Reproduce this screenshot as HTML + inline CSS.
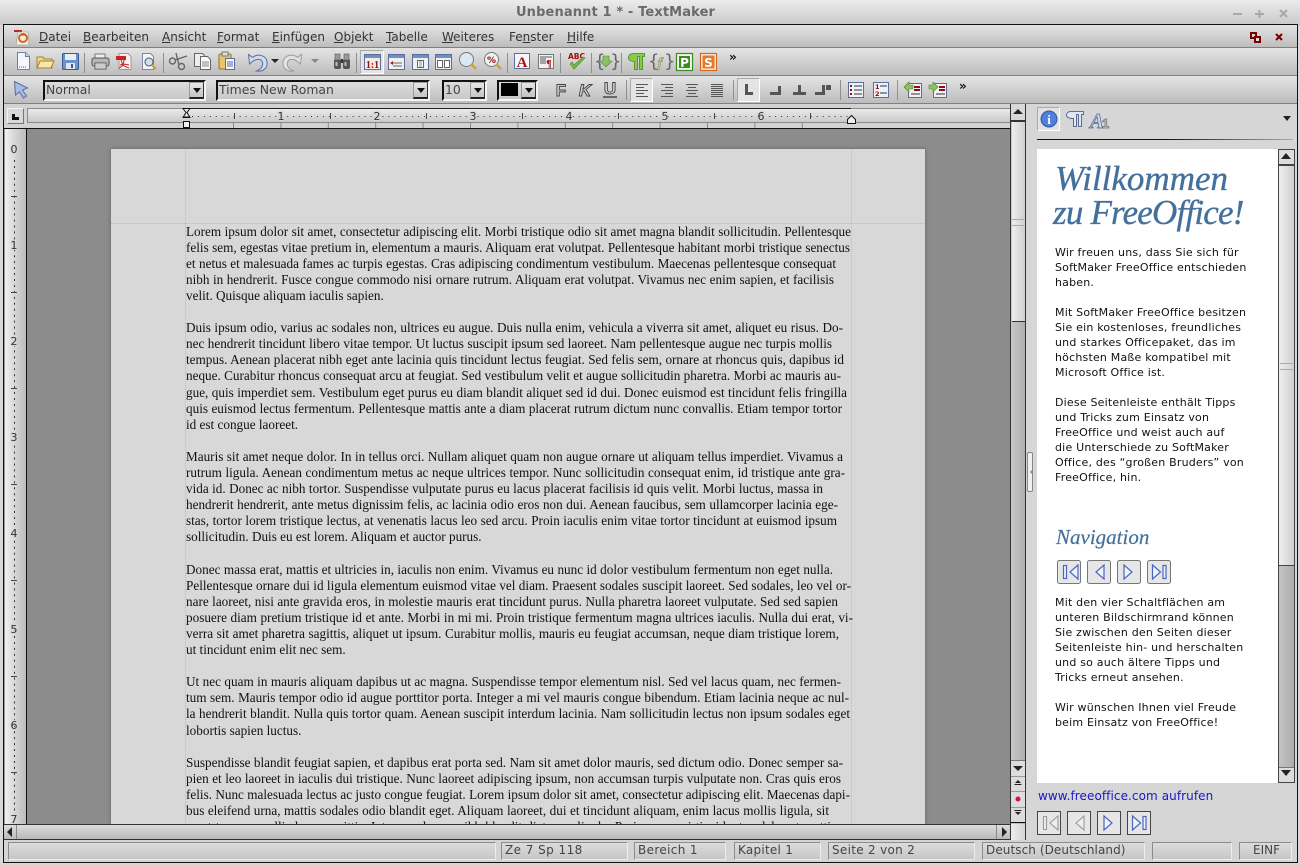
<!DOCTYPE html>
<html lang="de"><head><meta charset="utf-8"><title>Unbenannt 1 * - TextMaker</title>
<style>
html,body{margin:0;padding:0;width:1300px;height:865px;overflow:hidden;background:#d8d8d8}
*{box-sizing:border-box}
body{position:relative;font-family:"DejaVu Sans","Liberation Sans",sans-serif;font-size:12px;color:#333}
.a,.t,.bar,.btn,.combo,.st{position:absolute}
.t{white-space:nowrap;line-height:15px}
.bar{left:4px;width:1293px;background:linear-gradient(#e4e4e4,#bdbdbd)}
.m u{text-decoration:underline}
.combo{height:21px;background:linear-gradient(#dcdcdc,#c8c8c8);border:2px solid;border-color:#111 #f4f4f4 #f4f4f4 #111;font-size:12.4px;color:#444;padding:0 0 0 1px;line-height:15px;white-space:nowrap}
.combo i{position:absolute;right:0;top:0;width:15px;height:17px;background:linear-gradient(#e6e6e6,#c4c4c4);border:1px solid #999;border-bottom:2px solid #222;border-right:1px solid #333}
.combo i:after{content:"";position:absolute;left:3px;top:5px;border:4px solid transparent;border-top:5px solid #111;border-bottom:0}
.st{top:842px;height:18px;border:1px solid;border-color:#8c8c8c #eee #eee #8c8c8c;background:linear-gradient(#dcdcdc,#c6c6c6);color:#444;font-size:12px;line-height:15px;padding:0 0 0 3px;letter-spacing:.35px;white-space:nowrap}
.btn{background:linear-gradient(90deg,#e8e8e8,#cfcfcf);border:1px solid #555}
#doc{position:absolute;left:186px;top:223.6px;font-family:"Liberation Serif",serif;font-size:13.2px;line-height:16.1px;color:#111}
#doc p{margin:0;height:16.1px;white-space:nowrap;text-align:justify;text-align-last:justify}
#doc p.l{text-align:left;text-align-last:left}
#doc p.b{height:16.1px}
#sb .t{left:1055px;font-size:11px;color:#111;letter-spacing:.2px}
.h{font-family:"Liberation Serif",serif;font-style:italic;color:#44709c;position:absolute;white-space:nowrap;-webkit-text-stroke:.35px #44709c}
</style></head><body>

<!-- window frame -->
<div class="a" style="left:0;top:0;width:1300px;height:25px;background:linear-gradient(#ececec,#c9c9c9)"></div>
<div class="t" style="left:516px;top:5px;font-weight:bold;font-size:13px;color:#6a6a6a;letter-spacing:.13px">Unbenannt 1 * - TextMaker</div>
<div class="a" style="left:3px;top:24px;width:1295px;height:839px;border:1px solid #111;background:#d6d6d6"></div>

<!-- bars -->
<div class="bar" style="top:25px;height:22px"></div>
<div class="a" style="left:4px;top:47px;width:1293px;height:1px;background:#808080"></div>
<div class="bar" style="top:48px;height:27px"></div>
<div class="a" style="left:4px;top:75px;width:1293px;height:1px;background:#808080"></div>
<div class="bar" style="top:76px;height:27px"></div>
<div class="a" style="left:4px;top:103px;width:1293px;height:1px;background:#808080"></div>

<!-- menu -->
<div class="m">
<div class="t" style="left:39px;top:30px"><u>D</u>atei</div>
<div class="t" style="left:83px;top:30px"><u>B</u>earbeiten</div>
<div class="t" style="left:162px;top:30px"><u>A</u>nsicht</div>
<div class="t" style="left:217px;top:30px"><u>F</u>ormat</div>
<div class="t" style="left:272px;top:30px"><u>E</u>infügen</div>
<div class="t" style="left:334px;top:30px"><u>O</u>bjekt</div>
<div class="t" style="left:386px;top:30px"><u>T</u>abelle</div>
<div class="t" style="left:442px;top:30px"><u>W</u>eiteres</div>
<div class="t" style="left:509px;top:30px">Fe<u>n</u>ster</div>
<div class="t" style="left:567px;top:30px"><u>H</u>ilfe</div>
</div>

<!-- combos row 2 -->
<div class="combo" style="left:43px;top:80px;width:163px">Normal<i></i></div>
<div class="combo" style="left:216px;top:80px;width:214px">Times New Roman<i></i></div>
<div class="combo" style="left:442px;top:80px;width:45px">10<i></i></div>
<div class="combo" style="left:497px;top:80px;width:41px"><span class="a" style="left:2px;top:1px;width:17px;height:13px;background:#000"></span><i></i></div>
<!-- pressed boxes -->
<div class="a" style="left:630px;top:78px;width:23px;height:24px;background:#e4e4e4;border:1px solid;border-color:#aaa #fff #fff #aaa"></div>
<div class="a" style="left:737px;top:78px;width:23px;height:24px;background:#e4e4e4;border:1px solid;border-color:#aaa #fff #fff #aaa"></div>
<div class="a" style="left:360px;top:50px;width:24px;height:24px;background:#e4e4e4;border:1px solid;border-color:#aaa #fff #fff #aaa"></div>
<div class="t" style="left:729px;top:50px;font-size:12px;font-weight:bold;color:#111">»</div>
<div class="t" style="left:959px;top:79px;font-size:12px;font-weight:bold;color:#111">»</div>

<!-- horizontal ruler row -->
<div class="a" style="left:4px;top:104px;width:1006px;height:24px;background:#d2d2d2"></div>
<div class="a" style="left:7px;top:108px;width:17px;height:16px;background:#d8d8d8;border:1px solid;border-color:#f2f2f2 #777 #777 #f2f2f2"></div>
<div class="a" style="left:12px;top:114px;width:7px;height:6px;border-left:3px solid #111;border-bottom:3px solid #111"></div>
<div class="a" style="left:27px;top:108px;width:983px;height:15px;background:linear-gradient(#eaeaea,#c9c9c9);border:1px solid #8a8a8a;border-width:1px 0 1px 1px"></div>
<div class="a" style="left:187px;top:108px;width:664px;height:1px;background:#222"></div>
<div class="a" style="left:4px;top:128px;width:1006px;height:1px;background:#111"></div>

<!-- vertical ruler + workspace -->
<div class="a" style="left:4px;top:129px;width:22px;height:695px;background:linear-gradient(90deg,#f0f0f0,#cfcfcf 60%,#bcbcbc);border-left:1px solid #999"></div>
<div class="a" style="left:26px;top:129px;width:1px;height:695px;background:#111"></div>
<div class="a" style="left:27px;top:129px;width:983px;height:695px;background:#8c8c8c"></div>
<div class="a" style="left:111px;top:149px;width:814px;height:675px;background:#d8d8d8;box-shadow:0 0 3px 1px #737373"></div>

<!-- margin guides -->
<div class="a" style="left:185px;top:149px;width:0;height:675px;border-left:1px dotted #bcbcbc"></div>
<div class="a" style="left:851px;top:149px;width:0;height:675px;border-left:1px dotted #bcbcbc"></div>
<div class="a" style="left:111px;top:223px;width:814px;height:0;border-top:1px dotted #bcbcbc"></div>

<!-- document text -->
<div class="a" style="left:0;top:0;width:1010px;height:824px;overflow:hidden">
<div id="doc">
<p style="width:665px">Lorem ipsum dolor sit amet, consectetur adipiscing elit. Morbi tristique odio sit amet magna blandit sollicitudin. Pellentesque</p>
<p style="width:664px">felis sem, egestas vitae pretium in, elementum a mauris. Aliquam erat volutpat. Pellentesque habitant morbi tristique senectus</p>
<p style="width:650px">et netus et malesuada fames ac turpis egestas. Cras adipiscing condimentum vestibulum. Maecenas pellentesque consequat</p>
<p style="width:648px">nibh in hendrerit. Fusce congue commodo nisi ornare rutrum. Aliquam erat volutpat. Vivamus nec enim sapien, et facilisis</p>
<p class="l">velit. Quisque aliquam iaculis sapien.</p>
<p class="b"></p>
<p style="width:657px">Duis ipsum odio, varius ac sodales non, ultrices eu augue. Duis nulla enim, vehicula a viverra sit amet, aliquet eu risus. Do-</p>
<p style="width:646px">nec hendrerit tincidunt libero vitae tempor. Ut luctus suscipit ipsum sed laoreet. Nam pellentesque augue nec turpis mollis</p>
<p style="width:658px">tempus. Aenean placerat nibh eget ante lacinia quis tincidunt lectus feugiat. Sed felis sem, ornare at rhoncus quis, dapibus id</p>
<p style="width:655px">neque. Curabitur rhoncus consequat arcu at feugiat. Sed vestibulum velit et augue sollicitudin pharetra. Morbi ac mauris au-</p>
<p style="width:661px">gue, quis imperdiet sem. Vestibulum eget purus eu diam blandit aliquet sed id dui. Donec euismod est tincidunt felis fringilla</p>
<p style="width:656px">quis euismod lectus fermentum. Pellentesque mattis ante a diam placerat rutrum dictum nunc convallis. Etiam tempor tortor</p>
<p class="l">id est congue laoreet.</p>
<p class="b"></p>
<p style="width:657px">Mauris sit amet neque dolor. In in tellus orci. Nullam aliquet quam non augue ornare ut aliquam tellus imperdiet. Vivamus a</p>
<p style="width:659px">rutrum ligula. Aenean condimentum metus ac neque ultrices tempor. Nunc sollicitudin consequat enim, id tristique ante gra-</p>
<p style="width:637px">vida id. Donec ac nibh tortor. Suspendisse vulputate purus eu lacus placerat facilisis id quis velit. Morbi luctus, massa in</p>
<p style="width:652px">hendrerit hendrerit, ante metus dignissim felis, ac lacinia odio eros non dui. Aenean faucibus, sem ullamcorper lacinia ege-</p>
<p style="width:651px">stas, tortor lorem tristique lectus, at venenatis lacus leo sed arcu. Proin iaculis enim vitae tortor tincidunt at euismod ipsum</p>
<p class="l">sollicitudin. Duis eu est lorem. Aliquam et auctor purus.</p>
<p class="b"></p>
<p style="width:647px">Donec massa erat, mattis et ultricies in, iaculis non enim. Vivamus eu nunc id dolor vestibulum fermentum non eget nulla.</p>
<p style="width:665px">Pellentesque ornare dui id ligula elementum euismod vitae vel diam. Praesent sodales suscipit laoreet. Sed sodales, leo vel or-</p>
<p style="width:652px">nare laoreet, nisi ante gravida eros, in molestie mauris erat tincidunt purus. Nulla pharetra laoreet vulputate. Sed sed sapien</p>
<p style="width:667px">posuere diam pretium tristique id et ante. Morbi in mi mi. Proin tristique fermentum magna ultrices iaculis. Nulla dui erat, vi-</p>
<p style="width:653px">verra sit amet pharetra sagittis, aliquet ut ipsum. Curabitur mollis, mauris eu feugiat accumsan, neque diam tristique lorem,</p>
<p class="l">ut tincidunt enim elit nec sem.</p>
<p class="b"></p>
<p style="width:655px">Ut nec quam in mauris aliquam dapibus ut ac magna. Suspendisse tempor elementum nisl. Sed vel lacus quam, nec fermen-</p>
<p style="width:663px">tum sem. Mauris tempor odio id augue porttitor porta. Integer a mi vel mauris congue bibendum. Etiam lacinia neque ac nul-</p>
<p style="width:664px">la hendrerit blandit. Nulla quis tortor quam. Aenean suscipit interdum lacinia. Nam sollicitudin lectus non ipsum sodales eget</p>
<p class="l">lobortis sapien luctus.</p>
<p class="b"></p>
<p style="width:657px">Suspendisse blandit feugiat sapien, et dapibus erat porta sed. Nam sit amet dolor mauris, sed dictum odio. Donec semper sa-</p>
<p style="width:655px">pien et leo laoreet in iaculis dui tristique. Nunc laoreet adipiscing ipsum, non accumsan turpis vulputate non. Cras quis eros</p>
<p style="width:664px">felis. Nunc malesuada lectus ac justo congue feugiat. Lorem ipsum dolor sit amet, consectetur adipiscing elit. Maecenas dapi-</p>
<p style="width:643px">bus eleifend urna, mattis sodales odio blandit eget. Aliquam laoreet, dui et tincidunt aliquam, enim lacus mollis ligula, sit</p>
<p style="width:650px">amet tempor mollis lacus sagittis. Integer a lorem nibh blandit dictum a ligula. Proin nunc mi tincidunt sodales at mattis</p>
</div></div>

<!-- main vertical scrollbar -->
<div class="a" style="left:1010px;top:104px;width:16px;height:736px;background:linear-gradient(90deg,#c8c8c8,#adadad);border-left:1px solid #333;border-right:1px solid #333"></div>
<div class="btn" style="left:1011px;top:104px;width:14px;height:18px;background:#d8d8d8;border:0;border-bottom:2px solid #333"></div>
<div class="a" style="left:1012px;top:122px;width:13px;height:200px;background:linear-gradient(90deg,#eee,#cfcfcf);border-bottom:1px solid #333"></div>
<div class="a" style="left:1012px;top:219px;width:12px;height:7px;border-top:1px solid #aaa;border-bottom:1px solid #aaa"></div>
<div class="a" style="left:1011px;top:760px;width:14px;height:16px;background:#dcdcdc;border-top:1px solid #777"></div>
<div class="a" style="left:1011px;top:776px;width:14px;height:15px;background:#dcdcdc;border-top:1px solid #999"></div>
<div class="a" style="left:1011px;top:791px;width:14px;height:16px;background:#dcdcdc;border-top:1px solid #999"></div>
<div class="a" style="left:1011px;top:807px;width:14px;height:16px;background:#dcdcdc;border-top:1px solid #999;border-bottom:1px solid #111"></div>
<div class="a" style="left:1011px;top:824px;width:14px;height:16px;background:linear-gradient(90deg,#eee,#d4d4d4)"></div>

<!-- horizontal scrollbar -->
<div class="a" style="left:4px;top:824px;width:1006px;height:16px;background:linear-gradient(#dcdcdc,#bababa);border-top:1px solid #333;border-bottom:1px solid #333"></div>
<div class="a" style="left:16px;top:825px;width:1px;height:14px;background:#8a8a8a"></div>
<div class="a" style="left:996px;top:825px;width:1px;height:14px;background:#8a8a8a"></div>

<!-- side panel -->
<div class="a" style="left:1026px;top:104px;width:271px;height:736px;background:#d6d6d6"></div>
<div class="a" style="left:1037px;top:107px;width:23px;height:24px;background:#e2e2e2;border:1px solid;border-color:#aaa #fff #fff #aaa"></div>
<div class="a" style="left:1037px;top:139px;width:256px;height:1px;background:linear-gradient(90deg,#111 50%,#aaa)"></div>
<div class="a" style="left:1027px;top:452px;width:6px;height:40px;background:#f0f0f0;border:1px solid #888;border-radius:2px"></div>
<div class="a" style="left:1037px;top:149px;width:241px;height:634px;background:#fff"></div>

<!-- side panel scrollbar -->
<div class="a" style="left:1278px;top:149px;width:17px;height:634px;background:linear-gradient(90deg,#c4c4c4,#adadad);border:1px solid #444"></div>
<div class="a" style="left:1279px;top:150px;width:15px;height:16px;background:#dcdcdc;border-bottom:2px solid #444"></div>
<div class="a" style="left:1279px;top:166px;width:15px;height:400px;background:linear-gradient(90deg,#eee,#d0d0d0);border-bottom:1px solid #444"></div>
<div class="a" style="left:1280px;top:363px;width:13px;height:7px;border-top:1px solid #aaa;border-bottom:1px solid #aaa"></div>
<div class="a" style="left:1279px;top:767px;width:15px;height:15px;background:#dcdcdc;border-top:1px solid #777"></div>

<!-- sidebar content -->
<div id="sb">
<div class="h" style="left:1055px;top:159px;font-size:35px;line-height:40px">Willkommen</div>
<div class="h" style="left:1053px;top:193px;font-size:35px;line-height:40px;letter-spacing:-.8px">zu FreeOffice!</div>
<div class="t" style="top:245px">Wir freuen uns, dass Sie sich für</div>
<div class="t" style="top:260px">SoftMaker FreeOffice entschieden</div>
<div class="t" style="top:275px">haben.</div>
<div class="t" style="top:305px">Mit SoftMaker FreeOffice besitzen</div>
<div class="t" style="top:320px">Sie ein kostenloses, freundliches</div>
<div class="t" style="top:335px">und starkes Officepaket, das im</div>
<div class="t" style="top:350px">höchsten Maße kompatibel mit</div>
<div class="t" style="top:365px">Microsoft Office ist.</div>
<div class="t" style="top:395px">Diese Seitenleiste enthält Tipps</div>
<div class="t" style="top:410px">und Tricks zum Einsatz von</div>
<div class="t" style="top:425px">FreeOffice und weist auch auf</div>
<div class="t" style="top:440px">die Unterschiede zu SoftMaker</div>
<div class="t" style="top:455px">Office, des “großen Bruders” von</div>
<div class="t" style="top:470px">FreeOffice, hin.</div>
<div class="h" style="left:1056px;top:524px;font-size:21px;line-height:26px;-webkit-text-stroke:.2px #44709c">Navigation</div>
<div class="t" style="top:595px">Mit den vier Schaltflächen am</div>
<div class="t" style="top:610px">unteren Bildschirmrand können</div>
<div class="t" style="top:625px">Sie zwischen den Seiten dieser</div>
<div class="t" style="top:640px">Seitenleiste hin- und herschalten</div>
<div class="t" style="top:655px">und so auch ältere Tipps und</div>
<div class="t" style="top:670px">Tricks erneut ansehen.</div>
<div class="t" style="top:700px">Wir wünschen Ihnen viel Freude</div>
<div class="t" style="top:715px">beim Einsatz von FreeOffice!</div>
</div>
<div class="t" style="left:1038px;top:789px;color:#1818c8;font-size:12px;letter-spacing:.08px">www.freeoffice.com aufrufen</div>

<!-- status bar -->
<div class="a" style="left:4px;top:840px;width:1293px;height:22px;background:#d4d4d4"></div>
<div class="st" style="left:8px;width:488px"></div>
<div class="st" style="left:501px;width:127px;letter-spacing:.45px">Ze 7 Sp 118</div>
<div class="st" style="left:634px;width:92px">Bereich 1</div>
<div class="st" style="left:734px;width:87px;letter-spacing:.25px">Kapitel 1</div>
<div class="st" style="left:828px;width:147px;letter-spacing:.3px">Seite 2 von 2</div>
<div class="st" style="left:982px;width:163px;letter-spacing:.08px">Deutsch (Deutschland)</div>
<div class="st" style="left:1152px;width:80px"></div>
<div class="st" style="left:1239px;width:53px;padding-left:13px;letter-spacing:0">EINF</div>

<!-- icons and graphics -->
<svg class="a" style="left:0;top:0" width="1300" height="865" viewBox="0 0 1300 865" xmlns="http://www.w3.org/2000/svg" font-family="DejaVu Sans" >
<!-- window buttons -->
<g stroke="#a8a8a8" stroke-width="2" fill="none"><path d="M1233 14h9M1255 14h9M1259.500 10v8M1280 10l7 7M1287 10l-7 7"/></g>
<!-- menu right -->
<g fill="none" stroke="#7a0000" stroke-width="2"><rect x="1251" y="33" width="5" height="5"/><rect x="1255" y="37" width="5" height="5" fill="#ddd"/><path d="M1276 34l6 6M1282 34l-6 6"/></g>
<!-- app icon -->
<g transform="translate(13,29)"><path d="M1 1h8v2H1z" fill="#b22"/><path d="M5 3h10l1 13H3z" fill="#f3ecdf" stroke="#999" stroke-width=".6"/><circle cx="10" cy="9" r="4" fill="none" stroke="#d9661f" stroke-width="2"/><path d="M8 6h5" stroke="#c33" stroke-width="1"/></g>

<!-- row 1 -->
<g transform="translate(15,52)"><path d="M2.500 .5h8l4 4v13h-12z" fill="#f4f7fb" stroke="#6e7fa6"/><path d="M4 15h8" stroke="#556" stroke-dasharray="1 1"/><path d="M10.500 .5v4h4" fill="#c8d4ea" stroke="#6e7fa6"/></g>
<g transform="translate(36,53)"><path d="M1 15V4h6l1 2h8v9z" fill="#f1d88a" stroke="#a28232"/><path d="M1 15l3-7h14l-3 7z" fill="#f8e7a8" stroke="#a28232"/></g>
<g transform="translate(62,53)"><rect x=".5" y=".5" width="16" height="16" rx="1" fill="#6f92c8" stroke="#3b5a96"/><rect x="3" y="1" width="11" height="6" fill="#e8eef8"/><rect x="4" y="10" width="9" height="6" fill="#dfe6f2"/><rect x="9" y="11" width="2" height="4" fill="#3b5a96"/></g>
<g transform="translate(91,53)"><rect x="4" y="1" width="10" height="5" fill="#eee" stroke="#777"/><rect x="1" y="5" width="17" height="8" rx="2" fill="#b7b7b7" stroke="#555"/><rect x="4" y="10" width="11" height="6" fill="#fff" stroke="#555"/><path d="M5 12h9M5 14h9" stroke="#999"/></g>
<g transform="translate(116,53)"><path d="M3 .5h9l3 3v13H3z" fill="#f2f2f2" stroke="#999"/><rect x="0" y="3" width="10" height="4" fill="#c22"/><path d="M5 6c1 6 2 7 8 9M8 6c0 5-2 8-5 9M4 12c3-1 6-1 9 0" stroke="#c22" fill="none"/></g>
<g transform="translate(140,53)"><path d="M2.500 .5h8l3 3v13h-11z" fill="#f2f5fb" stroke="#7b88a8"/><circle cx="9" cy="9" r="4" fill="#cfe0f5" stroke="#555"/><path d="M12 12l4 4" stroke="#c9a23a" stroke-width="2"/></g>
<g transform="translate(169,52)" fill="none" stroke="#666" stroke-width="1.400"><circle cx="3.500" cy="9" r="3"/><circle cx="12.500" cy="14.500" r="3"/><path d="M6 8L18 4M10 13L7 1"/></g>
<g transform="translate(193,52)"><path d="M1.500 1.500h8l2 2v11h-10z" fill="#eee" stroke="#666"/><path d="M7.500 4.500h7l3 3v10h-10z" fill="#fafafa" stroke="#666"/><path d="M9 10h7M9 12h7M9 14h7" stroke="#888"/></g>
<g transform="translate(218,52)"><rect x="1" y="2" width="12" height="15" rx="1" fill="#e8c66a" stroke="#8d7330"/><rect x="4" y="0" width="6" height="4" fill="#ddd" stroke="#777"/><rect x="7.500" y="6.500" width="9" height="11" fill="#f2f6fc" stroke="#5c6f9c"/><path d="M9 10h6M9 12h6M9 14h6" stroke="#5c6f9c"/></g>
<!-- undo / redo -->
<path d="M248.500 54.500l1 9.500 3-2.500c4-3 9-3 10 1 1 4-2 7-6 8.500 6.500 1 11.500-3 10.500-9.500-1-6-9-8.500-14.500-4z" fill="#cfdcf2" stroke="#5a6f9e"/>
<path d="M248.500 54.500l1 9.500 3-2.500c4-3 9-3 10 1 1 4-2 7-6 8.500 6.500 1 11.500-3 10.500-9.500-1-6-9-8.500-14.500-4z" fill="#e2e2e2" stroke="#9a9a9a" transform="translate(550,0) scale(-1,1)"/>
<path d="M271 59h8l-4 4z" fill="#222"/>
<path d="M311 59h8l-4 4z" fill="#888"/>
<g transform="translate(333,53)"><rect x="1" y="6" width="7" height="10" rx="2" fill="#555"/><rect x="10" y="6" width="7" height="10" rx="2" fill="#555"/><rect x="2" y="1" width="5" height="6" fill="#9a9a9a" stroke="#555" stroke-width=".6"/><rect x="11" y="1" width="5" height="6" fill="#9a9a9a" stroke="#555" stroke-width=".6"/><rect x="8" y="6" width="2" height="4" fill="#333"/><rect x="2.500" y="9" width="2" height="4" fill="#bbb"/><rect x="11.500" y="9" width="2" height="4" fill="#bbb"/></g>
<g stroke="#8f8f8f"><path d="M84.500 53v20M163.500 53v20M356.500 53v20M507.500 53v20M560.500 53v20M591.500 53v20M621.500 53v20"/></g>
<!-- views -->
<g transform="translate(364,54)"><rect x=".5" y=".5" width="16" height="15" fill="#f1ece4" stroke="#5c6f9c"/><rect x="1" y="1" width="15" height="3" fill="#6f8fc8"/><text x="8.500" y="14" font-family="Liberation Serif" font-weight="bold" font-size="10" text-anchor="middle" fill="#a01010">1:1</text></g>
<g transform="translate(388,54)"><rect x=".5" y=".5" width="16" height="15" fill="#f1f1f1" stroke="#5c6f9c"/><rect x="1" y="1" width="15" height="3" fill="#6f8fc8"/><path d="M5 9h9M5 12h9" stroke="#666"/><path d="M2 9l3-2v4z" fill="#c01818"/></g>
<g transform="translate(412,54)"><rect x=".5" y=".5" width="16" height="15" fill="#eef1f6" stroke="#5c6f9c"/><rect x="1" y="1" width="15" height="3" fill="#6f8fc8"/><path d="M5.500 6.500h6v7h-6z" fill="#fff" stroke="#666"/><path d="M7 8h3M7 10h3M7 12h3" stroke="#888"/></g>
<g transform="translate(435,54)"><rect x=".5" y=".5" width="16" height="15" fill="#eef1f6" stroke="#5c6f9c"/><rect x="1" y="1" width="15" height="3" fill="#6f8fc8"/><path d="M2.500 6.500h5v7h-5zM9.500 6.500h5v7h-5z" fill="#fff" stroke="#666"/></g>
<g transform="translate(459,52)"><circle cx="7.500" cy="7.500" r="7" fill="#dbe8f6" stroke="#777"/><path d="M12 12l5 5" stroke="#caa23c" stroke-width="2.500"/></g>
<g transform="translate(484,52)"><circle cx="7.500" cy="7.500" r="7" fill="#eef2f7" stroke="#777"/><text x="7.500" y="11" font-size="9" font-weight="bold" text-anchor="middle" fill="#a01010">%</text><path d="M12 12l5 5" stroke="#caa23c" stroke-width="2.500"/></g>
<g transform="translate(514,53)"><rect x=".5" y=".5" width="15" height="15" fill="#f4f6fa" stroke="#5c6f9c"/><text x="8" y="14" font-family="Liberation Serif" font-weight="bold" font-size="15" text-anchor="middle" fill="#b01010">A</text></g>
<g transform="translate(538,53)"><rect x=".5" y="1.500" width="15" height="14" fill="#f1f1f1" stroke="#777"/><path d="M2 4h12M2 6h6M2 8h6M2 10h6" stroke="#556"/><text x="11" y="14" font-family="Liberation Serif" font-weight="bold" font-size="10" text-anchor="middle" fill="#a01010">¶</text></g>
<g transform="translate(567,51)"><text x="1" y="8" font-size="7.500" font-weight="bold" fill="#a01010">ABC</text><path d="M3 13l4 5 11-11-2-1-9 8-2-3z" fill="#7cb846" stroke="#4c8a24" stroke-width=".6"/></g>
<g transform="translate(597,53)"><text x="-3" y="14" font-size="18" fill="#666">{</text><text x="13" y="14" font-size="18" fill="#666">}</text><path d="M6 3h6v5h3l-6 6-6-6h3z" fill="#8fc063" stroke="#4c8a24" stroke-width=".6"/></g>
<!-- green pilcrow -->
<path d="M628.500 58c0-3 2-4.500 5-4.500h11v3h-2v13h-3v-13h-2v13h-3v-8c-3 0-6-1-6-3.500z" fill="#8cc84b" stroke="#3c8a24" stroke-width=".8"/>
<g transform="translate(651,53)"><text x="-3" y="14" font-size="18" fill="#666">{</text><text x="13" y="14" font-size="18" fill="#666">}</text><text x="9" y="14" font-family="Liberation Serif" font-style="italic" font-weight="bold" font-size="14" text-anchor="middle" fill="#c8d8a8" stroke="#668a3c" stroke-width=".5">f</text></g>
<g transform="translate(676,53)"><rect x=".5" y=".5" width="16" height="17" fill="#f0f5ea" stroke="#3c8a24" stroke-width="1.200"/><rect x="3" y="3" width="11" height="12" fill="#3c8a24"/><text x="8.500" y="14" font-size="12" font-weight="bold" text-anchor="middle" fill="#fff">P</text></g>
<g transform="translate(700,53)"><rect x=".5" y=".5" width="16" height="17" fill="#fbeee2" stroke="#d9661f" stroke-width="1.200"/><rect x="2.500" y="2.500" width="12" height="13" fill="#e27a2c"/><text x="8.500" y="14" font-size="12" font-weight="bold" text-anchor="middle" fill="#fff">S</text></g>

<!-- row 2 -->
<path d="M14.500 81.500l13 6.500-5 2 4 6-3 2-4-6-4 3z" fill="#a8bbe4" stroke="#5a6f9e"/>
<g font-family="Liberation Sans" font-weight="bold" font-size="17" text-anchor="middle" fill="#d4d4d4" stroke="#444" stroke-width=".9">
<text x="561" y="96">F</text><text x="585" y="96" font-style="italic">K</text><text x="610" y="94">U</text></g>
<rect x="603" y="96" width="14" height="2" fill="#666"/>
<g stroke="#8f8f8f"><path d="M626.500 80v20M733.500 80v20M840.500 80v20M897.500 80v20"/></g>
<g stroke="#555"><path d="M636 84.500h12M636 87.500h8M636 90.500h12M636 93.500h8M636 96.500h12"/><path d="M661 84.500h12M665 87.500h8M661 90.500h12M665 93.500h8M661 96.500h12"/><path d="M686 84.500h12M688 87.500h8M686 90.500h12M688 93.500h8M686 96.500h12"/><path d="M711 84.500h12M711 86.500h12M711 88.500h12M711 90.500h12M711 92.500h12M711 94.500h12M711 96.500h12"/></g>
<g fill="#555"><path d="M745 84h3v8h5v3h-8z"/><path d="M778 86h3v9h-11v-3h8z"/><path d="M798 85h3v7h5v3h-13v-3h5z"/><path d="M822 85h3v7h0v3h-10v-3h7z"/><rect x="826" y="85" width="5" height="5"/></g>
<g transform="translate(848,82)"><rect x=".5" y=".5" width="15" height="15" fill="#eef1f8" stroke="#5c6f9c"/><path d="M2 4h2M2 8h2M2 12h2" stroke="#8a0f0f" stroke-width="2"/><path d="M6 4h8M6 8h8M6 12h8" stroke="#333"/></g>
<g transform="translate(873,82)"><rect x=".5" y=".5" width="15" height="15" fill="#eef1f8" stroke="#5c6f9c"/><text x="2" y="7" font-size="6.500" font-weight="bold" fill="#8a0f0f">1</text><text x="2" y="14" font-size="6.500" font-weight="bold" fill="#8a0f0f">2</text><path d="M7 4h7M7 11h7" stroke="#333"/></g>
<g transform="translate(904,81)"><rect x="4.500" y="2.500" width="13" height="14" fill="#eef1f8" stroke="#5c6f9c"/><path d="M10 6h6M10 9h6" stroke="#8a0f0f" stroke-width="2"/><path d="M7 13h9" stroke="#333"/><path d="M0 6l5-5v3h4v4H5v3z" fill="#8fc063" stroke="#4c8a24" stroke-width=".6"/></g>
<g transform="translate(929,81)"><rect x="4.500" y="2.500" width="13" height="14" fill="#eef1f8" stroke="#5c6f9c"/><path d="M10 6h6M10 9h6" stroke="#8a0f0f" stroke-width="2"/><path d="M7 13h9" stroke="#333"/><path d="M9 6L4 1v3H0v4h4v3z" fill="#8fc063" stroke="#4c8a24" stroke-width=".6"/></g>

<!-- h ruler -->
<defs><pattern id="tx" x="233" y="122" width="47.400" height="6" patternUnits="userSpaceOnUse"><rect width="1" height="6" fill="#8a8a8a"/></pattern></defs>
<path d="M192 116.500H850" stroke="#333" stroke-dasharray="1 4.950"/>
<rect x="233" y="123" width="615" height="5" fill="url(#tx)"/>
<g stroke="#444"><path d="M234.500 113v6M330.500 113v6M426.500 113v6M522.500 113v6M618.500 113v6M714.500 113v6M810.500 113v6"/></g>
<g font-size="11" fill="#333" text-anchor="middle" stroke="#d6d6d6" stroke-width="2" paint-order="stroke"><text x="281" y="120">1</text><text x="377" y="120">2</text><text x="473" y="120">3</text><text x="569" y="120">4</text><text x="665" y="120">5</text><text x="761" y="120">6</text></g>
<path d="M183 108.500h7l-3 4 3 5h-7l3-5z" fill="#e8e8e8" stroke="#111"/>
<path d="M183.500 121.500h6v6h-6z" fill="#eee" stroke="#111"/><path d="M184 117h5" stroke="#111"/>
<path d="M847.500 123.500v-4l4-4 4 4v4z" fill="#eee" stroke="#111"/>
<!-- v ruler -->
<path d="M14.500 160V820" stroke="#333" stroke-dasharray="2 3.950"/>
<g stroke="#444"><path d="M11 196.500h6M11 292.500h6M11 388.500h6M11 484.500h6M11 580.500h6M11 676.500h6M11 772.500h6"/></g>
<g font-size="11" fill="#333" text-anchor="middle" stroke="#d6d6d6" stroke-width="2" paint-order="stroke"><text x="14" y="153">0</text><text x="14" y="249">1</text><text x="14" y="345">2</text><text x="14" y="441">3</text><text x="14" y="537">4</text><text x="14" y="633">5</text><text x="14" y="729">6</text><text x="14" y="823">7</text></g>

<!-- scrollbar arrows -->
<g fill="#222"><path d="M1018 109l5 5h-10zM1018 771l5-5h-10zM1286 153l5 6h-10zM1286 776l-5-6h10zM1283 116h8l-4 5z"/>
<path d="M7 832l5-5v10zM1007 832l-5-5v10z"/>
<path d="M1018 780l3 3h-6zM1014.500 784h7v1h-7zM1014.500 810h7v1h-7zM1018 815l-3-3h6z"/></g>
<circle cx="1018" cy="799" r="2.500" fill="#d01050"/>
<path d="M1032 470l-2 2 2 2z" fill="#888"/>

<!-- sidebar tabs -->
<circle cx="1049" cy="119" r="8" fill="#4f7fde" stroke="#2f55a8"/><text x="1049" y="124" font-family="Liberation Serif" font-weight="bold" font-size="13" text-anchor="middle" fill="#fff">i</text>
<path d="M1066.500 115c0-2 2-3.500 4-3.500h13v3h-2v12h-3v-12h-2v12h-3v-8c-4 0-7-1-7-3.500z" fill="#dfe6f4" stroke="#3c4f78" stroke-width=".8"/>
<text x="1097" y="128" font-family="Liberation Serif" font-style="italic" font-weight="bold" font-size="21" text-anchor="middle" fill="#cdd8ee" stroke="#52628a" stroke-width=".7">A</text>
<text x="1102" y="128" font-family="Liberation Sans" font-weight="bold" font-size="13" fill="#cfcfcf" stroke="#444" stroke-width=".5">1</text>

<!-- nav buttons -->
<g fill="#e6e6e6" stroke="#777">
<rect x="1057.500" y="560.500" width="23" height="23" rx="2"/><rect x="1087.500" y="560.500" width="23" height="23" rx="2"/><rect x="1117.500" y="560.500" width="23" height="23" rx="2"/><rect x="1147.500" y="560.500" width="23" height="23" rx="2"/></g>
<g fill="#e6e6e6" stroke="#444">
<rect x="1037.500" y="811.500" width="23" height="23"/><rect x="1067.500" y="811.500" width="23" height="23"/><rect x="1097.500" y="811.500" width="23" height="23"/><rect x="1127.500" y="811.500" width="23" height="23"/></g>
<g fill="#eef3fc" stroke="#4a66c0" stroke-width="1.200">
<path d="M1063.500 565.500h3v13h-3zM1078 565l-8 7 8 7z"/><path d="M1104 565l-8 7 8 7z"/><path d="M1124 565l8 7-8 7z"/><path d="M1152.500 565l8 7-8 7zM1163 565.500h3v13h-3z"/>
<path d="M1104 816l8 7-8 7z"/><path d="M1132.500 816l8 7-8 7zM1143 816.500h3v13h-3z"/></g>
<g fill="#eee" stroke="#999" stroke-width="1.100"><path d="M1043.500 816.500h3v13h-3zM1058 816l-8 7 8 7z"/><path d="M1084 816l-8 7 8 7z"/></g>
</svg>
</body></html>
